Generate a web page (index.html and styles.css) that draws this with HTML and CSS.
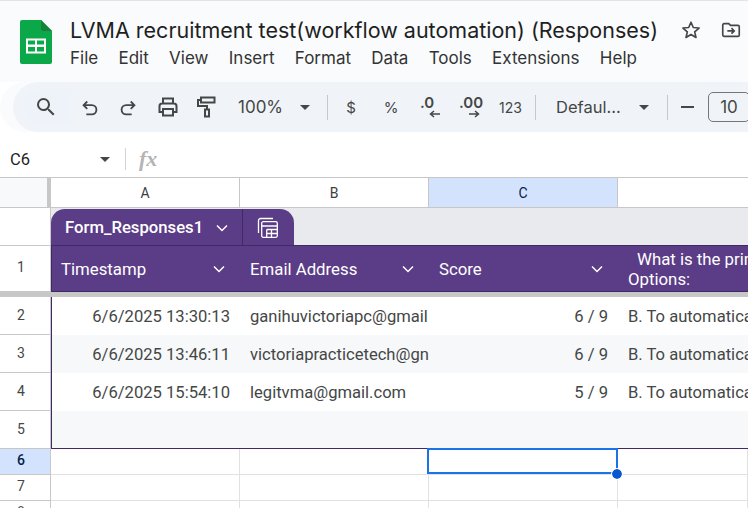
FILE: index.html
```html
<!DOCTYPE html>
<html lang="en">
<head>
<meta charset="utf-8">
<title>LVMA recruitment test</title>
<link rel="stylesheet" href="styles.css">
</head>
<body>
<div class="app">
  <header class="docbar">
    <svg class="logo" width="32" height="44" viewBox="0 0 32 44">
      <path d="M2 0h19l11 11v31a2 2 0 0 1-2 2H2a2 2 0 0 1-2-2V2a2 2 0 0 1 2-2z" fill="#0ba84a"/>
      <path d="M21 0l11 11H23a2 2 0 0 1-2-2z" fill="#188038"/>
      <path d="M6 18.500h20v15H6zM8 20.500v4h7v-4zM17 20.500v4h7v-4zM8 27v4.500h7V27zM17 27v4.500h7V27z" fill="#fff" fill-rule="evenodd"/>
    </svg>
    <div class="docmain">
      <div class="titlerow">
        <span class="title">LVMA recruitment test(workflow automation) (Responses)</span>
        <svg class="star" width="22" height="22" viewBox="0 0 24 24"><path d="M12 3.500l2.500 5.800 6.300.55-4.780 4.150 1.430 6.170L12 16.900l-5.450 3.270 1.430-6.170L3.200 9.850l6.300-.55z" fill="none" stroke="#444746" stroke-width="1.800" stroke-linejoin="round"/></svg>
        <svg class="move" width="22" height="22" viewBox="0 0 24 24"><path d="M3 6.500a1.500 1.500 0 0 1 1.500-1.500h5l2 2h8A1.500 1.500 0 0 1 21 8.500v9a1.500 1.500 0 0 1-1.500 1.500h-15A1.500 1.500 0 0 1 3 17.500z" fill="none" stroke="#444746" stroke-width="1.800"/><path d="M8 13h7M12.500 10l3 3-3 3" fill="none" stroke="#444746" stroke-width="1.800"/></svg>
      </div>
      <nav class="menu">
        <span>File</span><span>Edit</span><span>View</span><span>Insert</span><span>Format</span><span>Data</span><span>Tools</span><span>Extensions</span><span>Help</span>
      </nav>
    </div>
  </header>

  <div class="toolbar">
    <div class="searchbox">
      <svg width="24" height="24" viewBox="0 0 24 24"><path d="M15.500 14h-.79l-.28-.27A6.470 6.470 0 0 0 16 9.500 6.500 6.500 0 1 0 9.500 16c1.610 0 3.090-.59 4.230-1.570l.27.280v.79l5 4.990L20.490 19l-4.990-5zm-6 0C7.010 14 5 11.990 5 9.500S7.010 5 9.500 5 14 7.010 14 9.500 11.990 14 9.500 14z" fill="#444746"/></svg>
    </div>
    <svg class="ic ic-undo" width="22" height="22" viewBox="0 0 24 24"><path d="M9 6L5 10l4 4M5 10h9a5 5 0 0 1 0 10H8" fill="none" stroke="#444746" stroke-width="2"/></svg>
    <svg class="ic ic-redo" width="22" height="22" viewBox="0 0 24 24"><path d="M15 6l4 4-4 4M19 10h-9a5 5 0 0 0 0 10h6" fill="none" stroke="#444746" stroke-width="2"/></svg>
    <svg class="ic ic-print" width="24" height="24" viewBox="0 0 24 24"><path d="M7 8V3.500h10V8M7 17H3.500v-6A2.500 2.500 0 0 1 6 8.500h12a2.500 2.500 0 0 1 2.500 2.500v6H17M7 14h10v6.500H7z" fill="none" stroke="#444746" stroke-width="2"/></svg>
    <svg class="ic ic-paint" width="24" height="24" viewBox="0 0 24 24"><path d="M6 2.500h13.500v5H6zM6 5H3v6h9v3.500M10 14.500h4v7h-4z" fill="none" stroke="#444746" stroke-width="2"/></svg>
    <span class="tool zoomval">100%</span>
    <span class="caret c1"></span>
    <span class="sep s1"></span>
    <span class="tool dollar">$</span>
    <span class="tool pct">%</span>
    <span class="dec dec-less"><b>.0</b><svg width="11" height="8" viewBox="0 0 11 8"><path d="M11 4H2M5 1L1.500 4 5 7" fill="none" stroke="#444746" stroke-width="1.500"/></svg></span>
    <span class="dec dec-more"><b>.00</b><svg width="11" height="8" viewBox="0 0 11 8"><path d="M0 4h9M6 1l3.500 3L6 7" fill="none" stroke="#444746" stroke-width="1.500"/></svg></span>
    <span class="tool num">123</span>
    <span class="sep s2"></span>
    <span class="tool fontname">Defaul...</span>
    <span class="caret c2"></span>
    <span class="sep s3"></span>
    <span class="minus"></span>
    <span class="sizebox">10</span>
  </div>

  <div class="fxbar">
    <span class="cellref">C6</span>
    <span class="caret c3"></span>
    <span class="fxsep"></span>
    <span class="fx">fx</span>
  </div>

  <div class="sheet">
    <div class="corner"></div>
    <div class="colh">A</div>
    <div class="colh">B</div>
    <div class="colh colh-sel">C</div>
    <div class="colh colh-last"></div>

    <div class="rowh rowh-blank"></div>
    <div class="tabband">
      <div class="tab">
        <span class="tabname">Form_Responses1</span>
        <svg class="chev" width="14" height="14" viewBox="0 0 14 14"><path d="M2 4.500l5 5 5-5" fill="none" stroke="#fff" stroke-width="1.500"/></svg>
        <span class="tabdiv"></span>
        <svg class="tabcalc" width="22" height="22" viewBox="0 0 22 22"><path d="M1.500 16V3.500A2 2 0 0 1 3.500 1.500H16" fill="none" stroke="#fff" stroke-width="1.300"/><rect x="4.700" y="4.700" width="15.600" height="15.600" rx="1.500" fill="none" stroke="#fff" stroke-width="1.300"/><path d="M5 9h15M9.700 12.500h10.300M9.700 16.500h10.300M9.700 12.500v8M14.500 12.500v8" fill="none" stroke="#fff" stroke-width="1.300"/></svg>
      </div>
    </div>

    <div class="rowh rowh-head">1</div>
    <div class="th"><span>Timestamp</span><svg class="chev" width="14" height="14" viewBox="0 0 14 14"><path d="M2 4.500l5 5 5-5" fill="none" stroke="#fff" stroke-width="1.500"/></svg></div>
    <div class="th"><span>Email Address</span><svg class="chev" width="14" height="14" viewBox="0 0 14 14"><path d="M2 4.500l5 5 5-5" fill="none" stroke="#fff" stroke-width="1.500"/></svg></div>
    <div class="th"><span>Score</span><svg class="chev" width="14" height="14" viewBox="0 0 14 14"><path d="M2 4.500l5 5 5-5" fill="none" stroke="#fff" stroke-width="1.500"/></svg></div>
    <div class="th th-q"><span class="q1">What is the prin</span><span>Options:</span></div>

    <div class="freeze"></div>

    <div class="rowh">2</div>
    <div class="td td-r td-first">6/6/2025 13:30:13</div>
    <div class="td">ganihuvictoriapc@gmail</div>
    <div class="td td-r">6 / 9</div>
    <div class="td td-end">B. To automatica</div>

    <div class="rowh">3</div>
    <div class="td td-r alt td-first">6/6/2025 13:46:11</div>
    <div class="td alt">victoriapracticetech@gn</div>
    <div class="td td-r alt">6 / 9</div>
    <div class="td alt td-end">B. To automatica</div>

    <div class="rowh">4</div>
    <div class="td td-r td-first">6/6/2025 15:54:10</div>
    <div class="td">legitvma@gmail.com</div>
    <div class="td td-r">5 / 9</div>
    <div class="td td-end">B. To automatica</div>

    <div class="rowh rowh-five">5</div>
    <div class="tablefoot"></div>

    <div class="rowh rowh-sm rowh-sel">6</div>
    <div class="cell"></div>
    <div class="cell"></div>
    <div class="cell cell-sel"><span class="handle"></span></div>
    <div class="cell"></div>

    <div class="rowh rowh-sm">7</div>
    <div class="cell"></div>
    <div class="cell"></div>
    <div class="cell"></div>
    <div class="cell"></div>

    <div class="rowh rowh-sm">8</div>
    <div class="cell"></div>
    <div class="cell"></div>
    <div class="cell"></div>
    <div class="cell"></div>
  </div>
</div>
</body>
</html>
```
FILE: styles.css
```css
* { box-sizing: border-box; }
html, body { margin: 0; padding: 0; height: 100%; background: #fff; overflow: hidden; }
body { font-family: Roboto, "Liberation Sans", sans-serif; color: #1f1f1f; }
.app { width: 748px; height: 508px; overflow: hidden; display: flex; flex-direction: column; }

.docbar { height: 82px; flex: none; background: #f9fbfd; border-top: 1px solid #e3e5e1; display: flex; padding: 19px 0 0 20px; }
.logo { flex: none; margin-right: 18px; }
.docmain { display: flex; flex-direction: column; min-width: 0; }
.titlerow { display: flex; align-items: center; height: 24px; margin-top: -2px; white-space: nowrap; }
.title { font-family: Inter, sans-serif; font-size: 21.500px; line-height: 24px; color: #1f1f1f; width: 586px; flex: none; }
.star { margin-left: 24px; flex: none; }
.move { margin-left: 18px; flex: none; }
.menu { display: flex; gap: 20.300px; margin-top: 5px; font-family: Inter, sans-serif; font-size: 17px; line-height: 22px; color: #333; white-space: nowrap; }

.toolbar { height: 50px; flex: none; margin-left: 13px; width: 760px; background: #f0f4f9; border-radius: 25px 0 0 25px; display: flex; align-items: center; box-shadow: -13px 0 0 #f9fbfd; }
.searchbox { width: 48px; height: 36px; margin-left: 10px; background: #eef3fa; display: flex; align-items: center; padding-left: 11px; border-radius: 18px 0 0 18px; flex: none; }
.ic { flex: none; }
.ic-undo { margin-left: 8px; }
.ic-redo { margin-left: 16px; }
.ic-print { margin-left: 17px; }
.ic-paint { margin-left: 15px; }
.tool { color: #444746; font-family: Inter, sans-serif; flex: none; white-space: nowrap; }
.zoomval { font-size: 17px; margin-left: 19px; width: 47px; }
.caret { display: block; width: 0; height: 0; border-left: 5px solid transparent; border-right: 5px solid transparent; border-top: 5px solid #444746; flex: none; }
.c1 { margin-left: 15px; }
.sep { width: 1px; height: 25px; background: #c7c7c7; flex: none; }
.s1 { margin-left: 17px; }
.dollar { margin-left: 13px; width: 20px; text-align: center; font-size: 15px; }
.pct { margin-left: 20px; width: 20px; text-align: center; font-size: 15px; }
.dec { flex: none; display: flex; flex-direction: column; align-items: flex-end; line-height: 1; color: #444746; }
.dec b { font-family: Inter, sans-serif; font-size: 15px; font-weight: 600; line-height: 13px; align-self: flex-start; }
.dec svg { margin-top: 1px; }
.dec-less { margin-left: 19px; width: 20px; }
.dec-more { margin-left: 19px; width: 21px; }
.num { font-size: 14px; margin-left: 19px; width: 22px; text-align: center; }
.s2 { margin-left: 14px; }
.fontname { font-size: 16.500px; margin-left: 20px; width: 66px; }
.c2 { margin-left: 17px; }
.s3 { margin-left: 18px; }
.minus { width: 13px; height: 2px; background: #444746; margin-left: 13px; flex: none; }
.sizebox { width: 42px; height: 30px; margin-left: 14px; border: 1px solid #747775; border-radius: 5px; font-family: Inter, sans-serif; font-size: 17px; line-height: 28px; text-align: center; color: #444746; flex: none; }

.fxbar { height: 37px; flex: none; margin-top: 9px; background: #fff; display: flex; align-items: center; border-bottom: 1px solid #c7c7c7; padding-left: 10px; box-shadow: 0 -9px 0 #fff; }
.cellref { font-size: 16.500px; color: #1f1f1f; width: 90px; }
.fxsep { width: 1px; height: 22px; background: #d3d3d3; margin-left: 15px; }
.fx { font-family: "Liberation Serif", serif; font-style: italic; font-weight: 700; font-size: 22px; color: #b4b4b4; margin-left: 13px; }

.sheet { flex: 1; display: grid; grid-template-columns: 51px 189px 189px 189px 1fr; grid-template-rows: 30px 38px 46px 5px 38px 38px 38px 38px 26px 26px 26px; min-height: 0; }
.corner { background: #f8f9fa; border-right: 4px solid #c7c7c7; border-bottom: 1px solid #c7c7c7; }
.colh { font-size: 14px; color: #3c4043; display: flex; align-items: center; justify-content: center; border-right: 1px solid #c7c7c7; border-bottom: 1px solid #c7c7c7; background: #fff; }
.colh-last { border-right: 0; }
.colh-sel { background: #d3e3fd; color: #041e49; }

.rowh { font-size: 14px; color: #444746; display: flex; align-items: center; justify-content: center; padding-right: 8px; padding-bottom: 2px; background: #fff; border-right: 1px solid #c7c7c7; border-bottom: 1px solid #c7c7c7; }
.rowh-head { padding-bottom: 4px; }
.rowh-sm { padding-bottom: 4px; }
.rowh-sel { background: #d3e3fd; color: #041e49; font-weight: 500; }

.tabband { grid-column: 2 / -1; background: #e8eaed; display: flex; align-items: flex-end; }
.tab { width: 243px; height: 37px; background: #5b3d87; border-radius: 14px 14px 0 0; display: flex; align-items: center; color: #fff; padding-left: 14px; }
.tabname { font-size: 16.700px; font-weight: 500; width: 150px; white-space: nowrap; }
.tab .chev { flex: none; }
.tabdiv { width: 1px; height: 37px; background: #3f2a66; margin-left: 13px; flex: none; }
.tabcalc { margin-left: 14px; flex: none; }

.th { background: #5b3d87; color: #fff; font-size: 16.800px; display: flex; align-items: center; justify-content: space-between; margin-top: -1px; padding: 0 14px 0 10px; border-top: 1px solid #3f2a66; border-bottom: 1px solid #3f2a66; white-space: nowrap; overflow: hidden; }
.th .chev { flex: none; }
.rowh-head + .th { border-left: 1px solid #3f2a66; padding-left: 9px; }
.th-q { display: block; padding: 3px 0 0 10px; line-height: 20px; }
.th-q span { display: block; }
.th-q .q1 { padding-left: 9px; }

.freeze { grid-column: 1 / -1; background: #c7c7c7; }

.td { font-size: 16.600px; color: #444746; display: flex; align-items: center; padding: 0 10px; white-space: nowrap; overflow: hidden; background: #fff; }
.td-r { justify-content: flex-end; }
.td-first { border-left: 1px solid #3f2a66; }
.td-end { padding-right: 0; }
.alt { background: #f6f8f9; }

.tablefoot { grid-column: 2 / -1; background: #f7f8fa; border-left: 1px solid #3f2a66; border-bottom: 1px solid #3f2a66; }

.cell { border-right: 1px solid #e1e1e1; border-bottom: 1px solid #e1e1e1; background: #fff; }
.cell-sel { position: relative; }
.cell-sel::after { content: ""; position: absolute; left: -2px; top: -1px; right: -1px; bottom: 0; border: 2px solid #1a73e8; }
.handle { position: absolute; right: -5px; bottom: -5px; width: 10px; height: 10px; background: #0b57d0; border-radius: 50%; outline: 1px solid #fff; z-index: 1; }
```
